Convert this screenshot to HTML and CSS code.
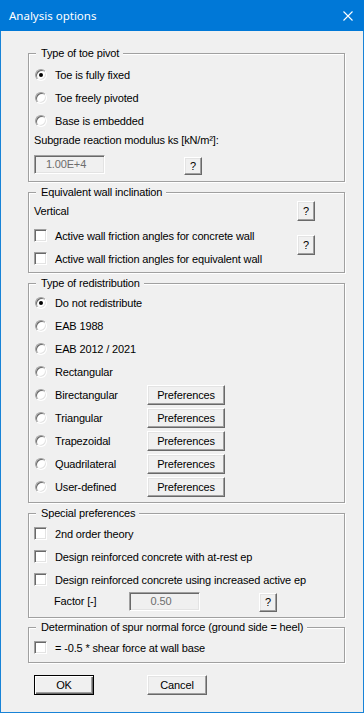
FILE: index.html
```html
<!DOCTYPE html>
<html lang="en">
<head>
  <meta charset="UTF-8" />
  <title>Analysis options</title>
  <meta name="viewport" content="width=device-width, initial-scale=1.0" />
  <link rel="stylesheet" href="styles.css">
</head>
<body>

  <div class="window">
    <div class="titlebar">
      <span class="title">Analysis options</span>
      <span class="close">
        <svg width="10" height="10" viewBox="0 0 10 10">
          <path d="M0.5 0.5 L9.5 9.5 M9.5 0.5 L0.5 9.5" stroke="#fff" stroke-width="1.1" fill="none"/>
        </svg>
      </span>
    </div>

    <div class="client">

      <!-- Toe pivot -->
      <fieldset class="group pivot">
        <legend>Type of toe pivot</legend>
        <div class="opt"><span class="radio checked"></span><span>Toe is fully fixed</span></div>
        <div class="opt"><span class="radio"></span><span>Toe freely pivoted</span></div>
        <div class="opt"><span class="radio"></span><span>Base is embedded</span></div>
        <div class="caption">Subgrade reaction modulus ks [kN/m²]:</div>
        <div class="edit-row">
          <span class="edit ks">1.00E+4</span>
          <button class="btn help ks-help">?</button>
        </div>
      </fieldset>

      <!-- Inclination -->
      <fieldset class="group incline">
        <legend>Equivalent wall inclination</legend>
        <div class="head-row">
          <span>Vertical</span>
          <button class="btn help">?</button>
        </div>
        <div class="check-block">
          <div class="checks">
            <div class="opt"><span class="check"></span><span>Active wall friction angles for concrete wall</span></div>
            <div class="opt"><span class="check"></span><span>Active wall friction angles for equivalent wall</span></div>
          </div>
          <button class="btn help block-help">?</button>
        </div>
      </fieldset>

      <!-- Redistribution -->
      <fieldset class="group redist">
        <legend>Type of redistribution</legend>
        <div class="opt"><span class="radio checked"></span><span>Do not redistribute</span></div>
        <div class="opt"><span class="radio"></span><span>EAB 1988</span></div>
        <div class="opt"><span class="radio"></span><span>EAB 2012 / 2021</span></div>
        <div class="opt"><span class="radio"></span><span>Rectangular</span></div>
        <div class="opt"><span class="radio"></span><span class="opt-name">Birectangular</span><button class="btn pref">Preferences</button></div>
        <div class="opt"><span class="radio"></span><span class="opt-name">Triangular</span><button class="btn pref">Preferences</button></div>
        <div class="opt"><span class="radio"></span><span class="opt-name">Trapezoidal</span><button class="btn pref">Preferences</button></div>
        <div class="opt"><span class="radio"></span><span class="opt-name">Quadrilateral</span><button class="btn pref">Preferences</button></div>
        <div class="opt"><span class="radio"></span><span class="opt-name">User-defined</span><button class="btn pref">Preferences</button></div>
      </fieldset>

      <!-- Special -->
      <fieldset class="group special">
        <legend>Special preferences</legend>
        <div class="opt"><span class="check"></span><span>2nd order theory</span></div>
        <div class="opt"><span class="check"></span><span>Design reinforced concrete with at-rest ep</span></div>
        <div class="opt"><span class="check"></span><span>Design reinforced concrete using increased active ep</span></div>
        <div class="factor-row">
          <span class="factor-label">Factor [-]</span>
          <span class="edit factor">0.50</span>
          <button class="btn help factor-help">?</button>
        </div>
      </fieldset>

      <!-- Spur -->
      <fieldset class="group spur">
        <legend>Determination of spur normal force (ground side = heel)</legend>
        <div class="opt"><span class="check"></span><span>= -0.5 * shear force at wall base</span></div>
      </fieldset>

      <div class="actions">
        <button class="btn cmd default">OK</button>
        <button class="btn cmd">Cancel</button>
      </div>

    </div>
  </div>

</body>
</html>
```

FILE: styles.css
```css
html, body {
  margin: 0;
  padding: 0;
  background: #f0f0f0;
}

.window {
  box-sizing: border-box;
  width: 364px;
  height: 713px;
  border: 1px solid #1883d7;
  border-top: none;
  background: #f0f0f0;
  font-family: 'Liberation Sans', Arial, sans-serif;
  font-size: 11px;
  letter-spacing: -0.15px;
  color: #000;
}

.titlebar {
  height: 31px;
  margin: 0 -1px;
  background: #0078d7;
  display: flex;
  align-items: center;
  justify-content: space-between;
  color: #fff;
}

.title {
  font-family: 'Noto Sans', 'Open Sans', sans-serif;
  font-size: 11.5px;
  letter-spacing: 0;
  padding-left: 9px;
  margin-top: -1px;
}

.close {
  display: flex;
  width: 10px;
  height: 10px;
  margin-right: 11px;
  margin-top: 1px;
}

.client {
  padding-left: 27px;
  padding-top: 16px;
}

/* group boxes: etched line */
.group {
  box-sizing: border-box;
  width: 317px;
  margin: 0;
  padding: 0 0 0 5px;
  border: 1px solid #a0a0a0;
  box-shadow: 1px 1px 0 #fff, inset 1px 1px 0 #fff;
  min-inline-size: 0;
}

.group legend {
  margin-left: 2px;
  padding: 0 4px 0 5px;
  line-height: 13px;
  background: #f0f0f0;
}

.pivot   { padding-top: 3px; padding-bottom: 6px; }
.incline { margin-top: 4px; padding-top: 2px; padding-bottom: 2px; }
.redist  { margin-top: 4px; padding-top: 1px; padding-bottom: 4px; }
.special { margin-top: 4px; padding-top: 2px; padding-bottom: 6px; }
.spur    { margin-top: 3px; padding-top: 2px; padding-bottom: 3px; }

.opt {
  display: flex;
  align-items: center;
  height: 23px;
  white-space: nowrap;
}

.opt > span:nth-child(2) {
  margin-left: 8px;
}

.opt-name {
  width: 92px;
}

/* radio buttons */
.radio {
  box-sizing: border-box;
  width: 12px;
  height: 12px;
  margin-left: 1px;
  border-radius: 50%;
  background: #fff;
  border: 1px solid;
  border-color: #a0a0a0 #fff #fff #a0a0a0;
  box-shadow: inset 1px 1px 0 #696969, inset -1px -1px 0 #e3e3e3;
  display: flex;
  align-items: center;
  justify-content: center;
  flex: none;
}

.radio.checked::after {
  content: "";
  width: 4px;
  height: 4px;
  border-radius: 50%;
  background: #000;
}

/* check boxes */
.check {
  box-sizing: border-box;
  width: 13px;
  height: 13px;
  background: #fff;
  border: 1px solid;
  border-color: #a0a0a0 #fff #fff #a0a0a0;
  box-shadow: inset 1px 1px 0 #696969, inset -1px -1px 0 #e3e3e3;
  flex: none;
}

.caption {
  height: 16px;
  line-height: 16px;
}

/* edit fields, disabled */
.edit {
  box-sizing: border-box;
  height: 19px;
  line-height: 17px;
  border: 1px solid;
  border-color: #a0a0a0 #fff #fff #a0a0a0;
  box-shadow: inset 1px 1px 0 #696969, inset -1px -1px 0 #e3e3e3;
  background: #f0f0f0;
  color: #6d6d6d;
  text-align: center;
  padding-right: 7px;
}

/* push buttons */
.btn {
  box-sizing: border-box;
  margin: 0;
  padding: 0;
  font: inherit;
  letter-spacing: inherit;
  color: #000;
  background: #f0f0f0;
  border: 1px solid;
  border-color: #fff #696969 #696969 #fff;
  box-shadow: inset -1px -1px 0 #a0a0a0, inset 1px 1px 0 #e3e3e3;
  border-radius: 0;
}

.help {
  width: 18px;
  height: 19px;
  line-height: 17px;
}

.pref {
  width: 78px;
  height: 20px;
  margin-top: 1px;
}

.edit-row {
  display: flex;
  align-items: flex-start;
  margin-top: 7px;
}

.ks {
  width: 71px;
}

.ks-help {
  height: 18px;
  margin-left: 79px;
  margin-top: 2px;
}

.head-row {
  display: flex;
  align-items: center;
  justify-content: space-between;
  height: 20px;
  padding-right: 29px;
}

.head-row .help {
  height: 20px;
}

.check-block {
  display: flex;
  margin-top: 3px;
  padding-right: 29px;
}

.checks {
  flex: 1;
}

.block-help {
  height: 20px;
  margin-top: 11px;
}

.factor-row {
  display: flex;
  align-items: center;
  height: 20px;
  padding-left: 20px;
}

.factor-label {
  width: 75px;
}

.factor {
  width: 71px;
}

.factor-help {
  margin-left: 59px;
  margin-top: 2px;
}

.actions {
  display: flex;
  gap: 53px;
  margin-top: 12px;
  padding-left: 6px;
}

.cmd {
  width: 60px;
  height: 20px;
}

.cmd.default {
  border-color: #000;
  box-shadow: inset 1px 1px 0 #fff, inset -1px -1px 0 #696969, inset -2px -2px 0 #a0a0a0;
}
```
